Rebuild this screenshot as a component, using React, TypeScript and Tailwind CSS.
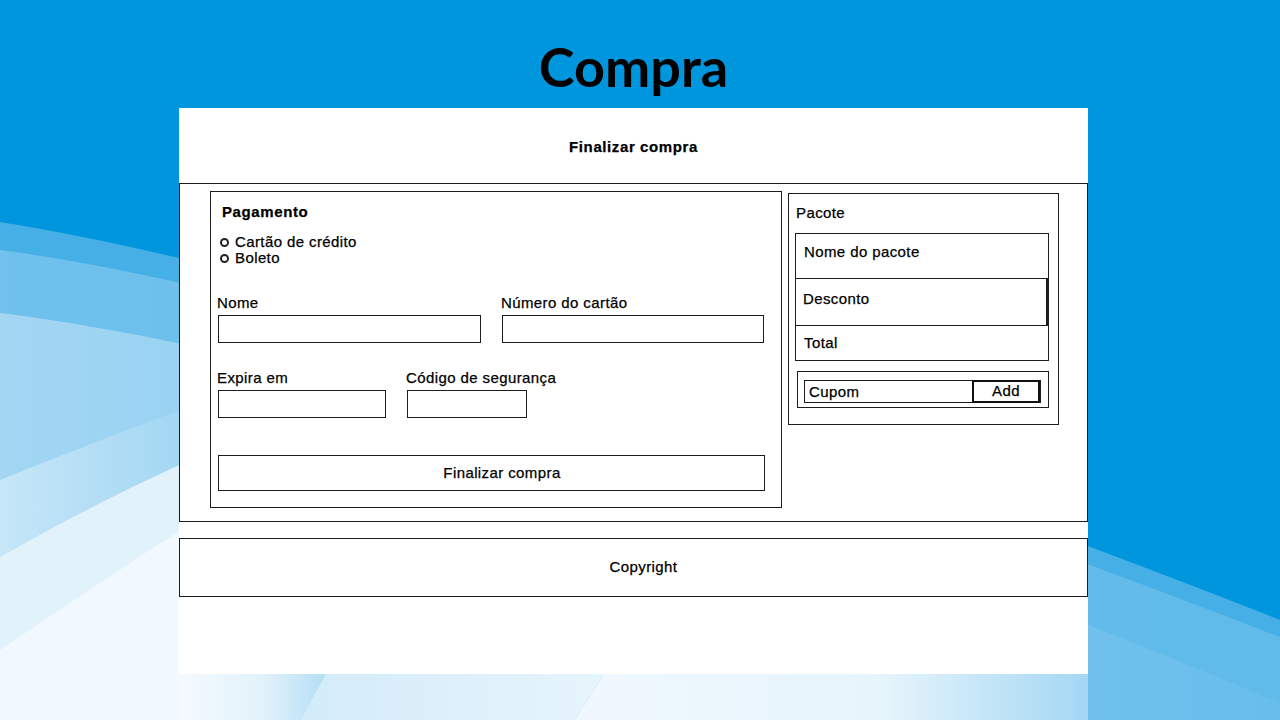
const font = { fontFamily: '"Liberation Sans", Arial, sans-serif' };

function Backdrop() {
  return (
    <svg className="absolute inset-0 h-full w-full" viewBox="0 0 1280 720" preserveAspectRatio="none">
      <defs>
        <linearGradient id="bandA" x1="0" y1="0" x2="1" y2="0">
          <stop offset="0" stopColor="#5db9ea" />
          <stop offset="1" stopColor="#3aa9e4" />
        </linearGradient>
        <linearGradient id="bandB" x1="0" y1="0" x2="1" y2="0">
          <stop offset="0" stopColor="#a2d6f3" />
          <stop offset="1" stopColor="#67bdeb" />
        </linearGradient>
        <linearGradient id="bandC" x1="0" y1="0" x2="1" y2="0">
          <stop offset="0" stopColor="#c6e6f8" />
          <stop offset="1" stopColor="#9fd5f2" />
        </linearGradient>
        <linearGradient id="foot1" x1="0" y1="0" x2="1" y2="0">
          <stop offset="0" stopColor="#f4fafe" />
          <stop offset="0.5" stopColor="#e2f2fb" />
          <stop offset="1" stopColor="#a6d9f3" />
        </linearGradient>
        <linearGradient id="foot2" x1="0" y1="0" x2="1" y2="0">
          <stop offset="0" stopColor="#d3ebf9" />
          <stop offset="1" stopColor="#e8f5fc" />
        </linearGradient>
        <linearGradient id="foot3" x1="0" y1="0" x2="1" y2="0">
          <stop offset="0" stopColor="#f0f8fe" />
          <stop offset="0.6" stopColor="#e6f4fc" />
          <stop offset="1" stopColor="#a4d7f3" />
        </linearGradient>
      </defs>
      <rect width="1280" height="720" fill="#0096de" />
      <path d="M0 222 C 300 270, 800 430, 1280 620 L1280 720 L0 720 Z" fill="#46afe6" />
      <path d="M0 250 C 300 290, 800 450, 1280 637 L1280 720 L0 720 Z" fill="url(#bandA)" />
      <path d="M0 250 C 300 290, 800 450, 1280 637 L1280 720 L0 720 Z" fill="#7fc8ef" opacity="0.55" />
      <path d="M0 313 C 300 350, 800 500, 1280 703 L1280 720 L0 720 Z" fill="url(#bandB)" />
      <path d="M0 480 C 80 448, 140 424, 200 404 L200 720 L0 720 Z" fill="url(#bandC)" />
      <path d="M0 557 C 80 512, 140 482, 200 456 L200 720 L0 720 Z" fill="#e2f2fb" />
      <path d="M0 650 C 80 596, 140 556, 200 518 L200 720 L0 720 Z" fill="#f2f9fe" />
      <path d="M0 600 L360 600 L300 720 L0 720 Z" fill="url(#foot1)" opacity="0" />
      <path d="M180 640 L345 640 L300 720 L180 720 Z" fill="url(#foot1)" />
      <path d="M345 640 L625 640 L575 720 L300 720 Z" fill="url(#foot2)" />
      <path d="M625 640 L1088 640 L1088 720 L575 720 Z" fill="url(#foot3)" />
    </svg>
  );
}

function Field({ label, width }: { label: string; width: string }) {
  return (
    <div className="flex flex-col">
      <span className="h-[18px] leading-[18px] -ml-px">{label}</span>
      <div className={`${width} mt-[3px] h-[28px] border border-[#1c1c1c]`} />
    </div>
  );
}

function Radio({ label }: { label: string }) {
  return (
    <div className="flex h-[16px] items-center leading-[16px]">
      <span className="ml-[5px] mr-[6px] h-[9px] w-[9px] rounded-full border-2 border-[#222]" />
      <span>{label}</span>
    </div>
  );
}

function Payment() {
  return (
    <div className="h-[317px] w-[572px] border border-[#1c1c1c] pl-[7px]">
      <div className="mt-[11px] ml-[4px] h-[18px] font-bold leading-[18px] tracking-[0.6px]">Pagamento</div>
      <div className="mt-[13px] -ml-[3px]">
        <Radio label="Cartão de crédito" />
        <Radio label="Boleto" />
      </div>
      <div className="mt-[28px] flex gap-[21px]">
        <Field label="Nome" width="w-[263px]" />
        <Field label="Número do cartão" width="w-[262px]" />
      </div>
      <div className="mt-[26px] flex gap-[21px]">
        <Field label="Expira em" width="w-[168px]" />
        <Field label="Código de segurança" width="w-[120px]" />
      </div>
      <button className="mt-[37px] flex h-[36px] w-[547px] items-center justify-center border border-[#1c1c1c] pl-[21px] tracking-[0.4px]">
        Finalizar compra
      </button>
    </div>
  );
}

function Package() {
  return (
    <div className="mt-[2px] h-[232px] w-[271px] border border-[#1c1c1c]">
      <div className="mt-[10px] ml-[7px] h-[18px] leading-[18px]">Pacote</div>
      <div className="mt-[11px] ml-[6px] w-[254px] border border-[#1c1c1c]">
        <div className="h-[45px] border-b border-[#1c1c1c] pt-[9px] pl-[8px] leading-[18px]">Nome do pacote</div>
        <div className="h-[47px] border-b border-r-2 border-[#1c1c1c] pt-[11px] pl-[7px] leading-[18px]">Desconto</div>
        <div className="h-[34px] pt-[8px] pl-[8px] leading-[18px]">Total</div>
      </div>
      <div className="mt-[10px] ml-[8px] h-[37px] w-[252px] border border-[#1c1c1c] pt-[8px] pl-[6px]">
        <div className="flex h-[23px] w-[237px] border border-[#1c1c1c]">
          <span className="flex-1 pl-[4px] leading-[21px]">Cupom</span>
          <span className="flex w-[68px] items-center justify-center border-2 border-[#111] -mt-px -mb-px">Add</span>
        </div>
      </div>
    </div>
  );
}

export default function App() {
  return (
    <div className="relative h-[720px] w-[1280px] overflow-hidden text-[15px] text-black" style={font}>
      <Backdrop />
      <div className="relative ml-[179px] w-[909px]">
        <div className="h-[108px] pt-[40px]">
          <h1
            className="text-center text-[54px] font-bold leading-[54px] text-black"
            style={{ fontFamily: 'Lato, "Open Sans", sans-serif' }}
          >
            Compra
          </h1>
        </div>
        <div className="h-[566px] bg-white tracking-[0.4px] [-webkit-text-stroke:0.25px_black]">
          <div className="flex h-[75px] items-center justify-center pt-[3px] font-bold tracking-[0.6px]">
            Finalizar compra
          </div>
          <div className="flex h-[339px] border border-[#1c1c1c] pt-[7px] pl-[30px] gap-[6px]">
            <Payment />
            <Package />
          </div>
          <div className="mt-[16px] flex h-[59px] items-center justify-center border border-[#1c1c1c] pl-[20px]">
            Copyright
          </div>
        </div>
      </div>
    </div>
  );
}
